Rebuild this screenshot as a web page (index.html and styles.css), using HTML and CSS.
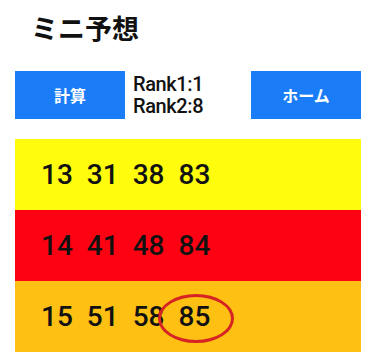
FILE: index.html
```html
<!DOCTYPE html>
<html lang="ja">
<head>
  <meta charset="UTF-8" />
  <title>ミニ予想</title>
  <link rel="stylesheet" href="styles.css">
</head>
<body>
  <main class="pagina">
    <h1 class="titulo">ミニ予想</h1>

    <div class="barra">
      <button class="boton">計算</button>
      <div class="rank">
        <div>Rank1:1</div>
        <div>Rank2:8</div>
      </div>
      <button class="boton">ホーム</button>
    </div>

    <div class="filas">
      <div class="fila amarilla">
        <span>13</span><span>31</span><span>38</span><span>83</span>
      </div>
      <div class="fila roja">
        <span>14</span><span>41</span><span>48</span><span>84</span>
      </div>
      <div class="fila naranja">
        <span>15</span><span>51</span><span>58</span><span class="marcado">85</span>
      </div>
    </div>
  </main>
</body>
</html>
```

FILE: styles.css
```css
:root {
  --azul: #1a7cf6;
  --amarillo: #fffc0e;
  --rojo: #fd0213;
  --naranja: #fdc013;
  --marca: #d62424;
  --texto: #111;
}

body {
  margin: 0;
  background: #fff;
  color: var(--texto);
  font-family: Roboto, 'Noto Sans CJK JP', sans-serif;
}

.pagina {
  width: 346px;
  margin-left: 15px;
}

.titulo {
  margin: 0 0 15px;
  padding-left: 16px;
  height: 56px;
  line-height: 56px;
  font-family: 'Noto Sans CJK JP', sans-serif;
  font-size: 27px;
  font-weight: bold;
}

.barra {
  display: flex;
  align-items: center;
  height: 48px;
}

.boton {
  width: 110px;
  height: 48px;
  border: none;
  background-color: var(--azul);
  color: white;
  font-family: 'Noto Sans CJK JP', sans-serif;
  font-size: 16px;
  font-weight: bold;
  cursor: pointer;
}

.rank {
  flex: 1;
  padding-left: 8px;
  font-size: 20px;
  font-weight: 500;
  line-height: 22px;
  letter-spacing: -0.4px;
}

.filas {
  margin-top: 20px;
}

.fila {
  display: flex;
  align-items: center;
  gap: 14px;
  height: 71px;
  padding-left: 26px;
  font-size: 28px;
  font-weight: 500;
}

.amarilla {
  background-color: var(--amarillo);
}

.roja {
  background-color: var(--rojo);
}

.naranja {
  background-color: var(--naranja);
}

.marcado {
  position: relative;
}

.marcado::after {
  content: '';
  position: absolute;
  left: -20px;
  right: -24px;
  top: -6px;
  bottom: -10px;
  border: 3px solid var(--marca);
  border-radius: 50%;
}
```
